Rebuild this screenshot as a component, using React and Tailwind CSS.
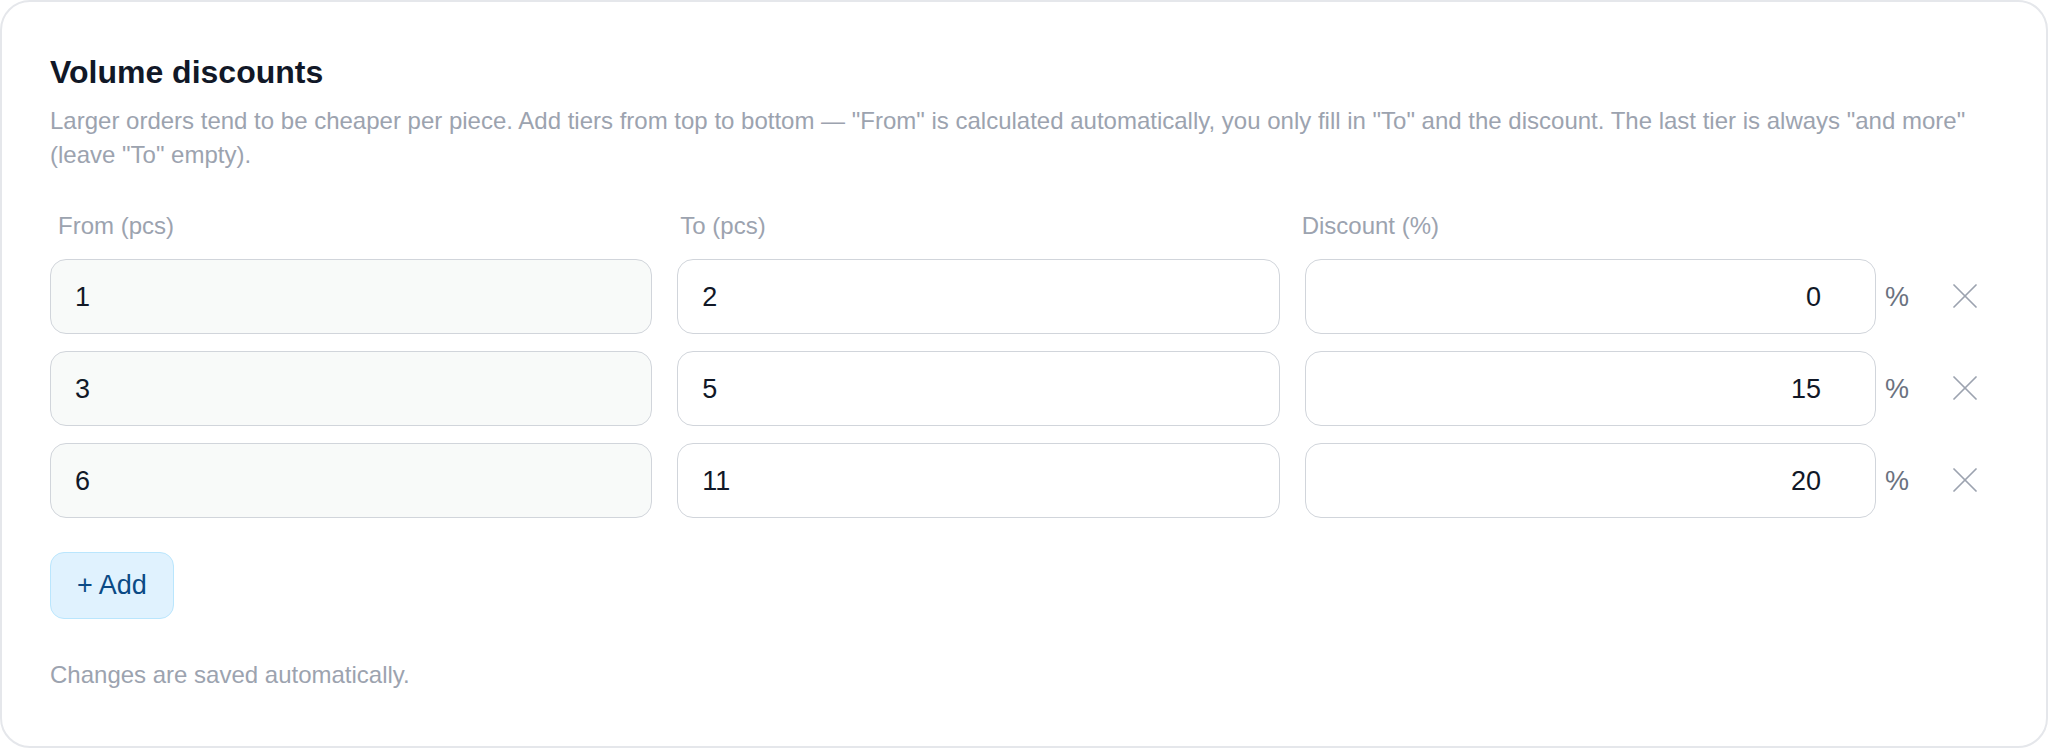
import React, { useState } from 'react';

const initialTiers = [
  { id: 1, from: '1', to: '2', discount: '0' },
  { id: 2, from: '3', to: '5', discount: '15' },
  { id: 3, from: '6', to: '11', discount: '20' },
];

const CloseIcon = () => (
  <svg width="24" height="24" viewBox="0 0 24 24" fill="none" stroke="currentColor" strokeWidth="1.7" strokeLinecap="round">
    <path d="M1 1L23 23" />
    <path d="M23 1L1 23" />
  </svg>
);

export default function App() {
  const [tiers, setTiers] = useState(initialTiers);

  const updateTier = (id, field, value) => {
    setTiers((prev) => prev.map((t) => (t.id === id ? { ...t, [field]: value } : t)));
  };

  const removeTier = (id) => {
    setTiers((prev) => prev.filter((t) => t.id !== id));
  };

  const addTier = () => {
    setTiers((prev) => [...prev, { id: Date.now(), from: '', to: '', discount: '' }]);
  };

  return (
    <div className="bg-white font-['Liberation_Sans',Arial,sans-serif]">
      <div className="h-[748px] box-border border-2 border-[#e5e7eb] rounded-[30px] bg-white pt-[50px] pl-[48px] pr-[48px]">
        <h2 className="text-[32px] leading-[40px] font-bold text-[#111827]">Volume discounts</h2>
        <p className="mt-[12px] text-[24px] leading-[34px] text-[#9ca3af]">
          Larger orders tend to be cheaper per piece. Add tiers from top to bottom — "From" is calculated automatically, you only fill in "To" and the discount. The last tier is always "and more" (leave "To" empty).
        </p>

        <div className="mt-[37px] grid grid-cols-[1fr_1fr_1fr_66px] gap-x-[25px] text-[24px] leading-[34px] text-[#9ca3af]">
          <div className="pl-[8px]">From (pcs)</div>
          <div className="pl-[3px]">To (pcs)</div>
          <div className="-ml-[3px]">Discount (%)</div>
          <div />
        </div>

        <div className="mt-[16px] flex flex-col gap-[17px]">
          {tiers.map((tier) => (
            <div key={tier.id} className="grid grid-cols-[1fr_1fr_1fr_66px] gap-x-[25px]">
              <input
                type="text"
                value={tier.from}
                readOnly
                className="h-[75px] w-full min-w-0 rounded-2xl border border-[#d1d5db] bg-[#f8faf9] pl-[24px] pr-[24px] pt-[2px] text-[27px] text-[#111827] outline-none"
              />
              <input
                type="text"
                value={tier.to}
                onChange={(e) => updateTier(tier.id, 'to', e.target.value)}
                className="h-[75px] w-full min-w-0 rounded-2xl border border-[#d1d5db] bg-white pl-[24px] pr-[24px] pt-[2px] text-[27px] text-[#111827] outline-none"
              />
              <div className="flex items-center gap-[9px]">
                <input
                  type="text"
                  value={tier.discount}
                  onChange={(e) => updateTier(tier.id, 'discount', e.target.value)}
                  className="h-[75px] flex-1 min-w-0 rounded-2xl border border-[#d1d5db] bg-white pl-[24px] pr-[54px] pt-[2px] text-right text-[27px] text-[#111827] outline-none"
                />
                <span className="w-[22px] text-[27px] pt-[2px] text-[#6b7280]">%</span>
              </div>
              <div className="flex items-center justify-center">
                <button
                  type="button"
                  onClick={() => removeTier(tier.id)}
                  className="text-[#9ca3af] -mt-[2px]"
                  aria-label="Remove tier"
                >
                  <CloseIcon />
                </button>
              </div>
            </div>
          ))}
        </div>

        <button
          type="button"
          onClick={addTier}
          className="mt-[34px] h-[67px] px-[26px] rounded-[14px] border border-[#bae6fd] bg-[#e0f2fe] text-[27px] text-[#0b4a85]"
        >
          + Add
        </button>

        <p className="mt-[39px] text-[24px] leading-[34px] text-[#9ca3af]">Changes are saved automatically.</p>
      </div>
    </div>
  );
}
